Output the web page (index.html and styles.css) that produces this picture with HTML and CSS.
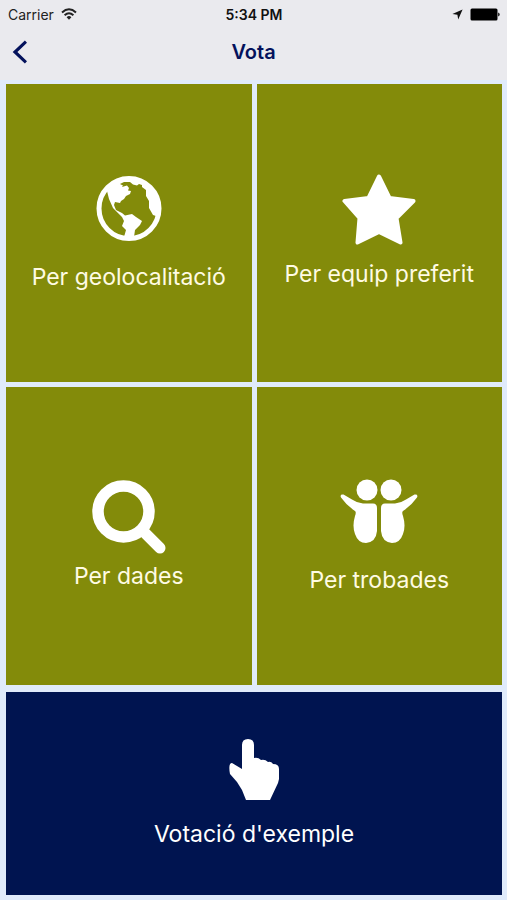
FILE: index.html
```html
<!DOCTYPE html>
<html lang="ca">
<head>
<meta charset="utf-8">
<meta name="viewport" content="width=device-width, initial-scale=1">
<title>Vota</title>
<link rel="stylesheet" href="styles.css">
</head>
<body>
<header class="header">
  <div class="status">
    <div class="carrier">
      <span>Carrier</span>
      <svg width="16" height="12" viewBox="0 0 16 12" aria-hidden="true">
        <g fill="none" stroke="#222" stroke-width="2">
          <path d="M1 4.4Q8-1.8 15 4.4"/>
          <path d="M3.6 7.2Q8 3.2 12.4 7.2"/>
        </g>
        <path d="M5.6 9.2Q8 7 10.4 9.2L8 11.8z" fill="#222"/>
      </svg>
    </div>
    <span class="clock">5:34 PM</span>
    <div class="indicators">
      <svg width="11" height="11" viewBox="0 0 11 11" aria-hidden="true"><path d="M10.6.4L6.2 10.6L5.4 5.7L.4 5z" fill="#111"/></svg>
      <svg width="30" height="13" viewBox="0 0 30 13" aria-hidden="true"><rect x=".5" y=".5" width="27" height="12" rx="1.5"/><path d="M28 4.5Q29.8 5 29.8 6.500T28 8.5z" fill="#333"/></svg>
    </div>
  </div>
  <nav class="navbar">
    <button class="back" type="button" aria-label="Enrere">
      <svg width="15" height="24" viewBox="0 0 15 24" aria-hidden="true"><path d="M14 1.600L3 12L14 22.400" fill="none" stroke="#04125c" stroke-width="3.200"/></svg>
    </button>
    <h1 class="title">Vota</h1>
  </nav>
</header>
<main class="menu">
  <button class="tile" type="button">
    <svg class="icon" width="66" height="65" viewBox="0 0 66 65" aria-hidden="true">
      <circle cx="33" cy="32.500" r="30" fill="none" stroke="#fff" stroke-width="5"/>
      <path fill="#fff" d="M11 15Q20 3 34 3L48 7L46 9L43 8L41 9.500L37 8.500L34 6L28 6L24 8L27 9.500L26 11L31 9.500L33 12L32 14.500L35 15L34 18L30 20L28 23L25 25L24 27L19 26L18 29L20 34L26 37L29 39.500L36 38L40 41L46 45L44 49L39 54L38 61L28 61L30 54L26 50L28 45L26 41L17 32L13 23z"/>
      <path fill="#fff" d="M46 7Q57 13 61 23L62 34L60 40L57 39L53 32L53 25L50 20L50 14L46 11z"/>
    </svg>
    <span class="label spaced">Per geolocalitació</span>
  </button>
  <button class="tile raised" type="button">
    <svg class="icon" width="76" height="71" viewBox="0 0 76 71" aria-hidden="true"><path d="M38 2.500L48.500 24L72.500 27L55.500 44L59.500 68.500L38 58L16.500 68.500L18.500 44L3.500 27L27.500 24z" fill="#fff" stroke="#fff" stroke-width="4" stroke-linejoin="round"/></svg>
    <span class="label snug">Per equip preferit</span>
  </button>
  <button class="tile raised" type="button">
    <svg class="icon" width="76" height="75" viewBox="0 0 76 75" aria-hidden="true"><g fill="none" stroke="#fff"><circle cx="32.500" cy="32.500" r="25.500" stroke-width="11.500"/><path d="M51 51L69 69" stroke-width="11" stroke-linecap="round"/></g></svg>
    <span class="label tight">Per dades</span>
  </button>
  <button class="tile" type="button">
    <svg class="icon" width="78" height="65" viewBox="0 0 78 65" aria-hidden="true">
      <g id="person" fill="#fff"><circle cx="27" cy="11" r="10.500"/><path d="M3.500 15.500Q-.5 15 1 18.500Q7 27 15 32Q16.500 33 15 37Q12 47 15 55Q18 64 26 64Q36 63 37 52V29Q37 24.500 33 24.500H23Q17 24 12 20.500z"/></g>
      <use href="#person" transform="matrix(-1 0 0 1 78 0)"/>
    </svg>
    <span class="label spaced">Per trobades</span>
  </button>
  <button class="tile sample" type="button">
    <svg class="icon" width="50" height="62" viewBox="0 0 50 62" aria-hidden="true"><path fill="#fff" d="M13 6Q13 0 19 0T25 6V19Q29 18 32 21Q36 20 39 23Q42 22 44 25Q50 25 50 30V40L49 44L41 61H17L13 51L8 43L1 35Q-1 24 3 24L13 30z"/></svg>
    <span class="label">Votació d'exemple</span>
  </button>
</main>
</body>
</html>
```
FILE: styles.css
```css
* {
  box-sizing: border-box;
}

body {
  margin: 0;
  min-height: 100vh;
  display: flex;
  flex-direction: column;
  background: #e0ebfb;
  font-family: Inter, "Liberation Sans", sans-serif;
}

button {
  border: 0;
  padding: 0;
  font: inherit;
  cursor: pointer;
}

svg {
  display: block;
}

.header {
  background: #eaeaee;
}

.status {
  display: grid;
  grid-template-columns: 1fr auto 1fr;
  align-items: center;
  height: 28px;
  padding: 0 7px 0 8px;
  font-size: 14px;
  color: #222;
}

.carrier,
.indicators {
  display: flex;
  align-items: center;
  gap: 7px;
}

.indicators {
  justify-content: flex-end;
}

.clock {
  font-weight: 600;
  color: #111;
}

.navbar {
  display: grid;
  grid-template-columns: 1fr auto 1fr;
  align-items: center;
  height: 52px;
  padding: 0 12px 4px;
}

.back {
  justify-self: start;
  background: none;
}

.title {
  margin: 0;
  font-size: 20px;
  line-height: 24px;
  font-weight: 600;
  color: #04125c;
}

.menu {
  flex: 1;
  display: grid;
  grid-template-columns: 1fr 1fr;
  grid-template-rows: 298fr 298fr 205fr;
  gap: 5px;
  padding: 4px 5px 5px 6px;
}

.tile {
  display: flex;
  flex-direction: column;
  align-items: center;
  justify-content: center;
  background: #838b0a;
  color: #fffbe3;
}

.raised {
  padding-bottom: 4px;
}

.sample {
  grid-column: 1 / -1;
  margin-top: 2px;
  background: #001450;
  color: #fff;
}

.label {
  margin-top: 19px;
  font-size: 23px;
  line-height: 28px;
}

.spaced {
  margin-top: 22px;
}

.snug {
  margin-top: 15px;
}

.tight {
  margin-top: 8px;
}
```
